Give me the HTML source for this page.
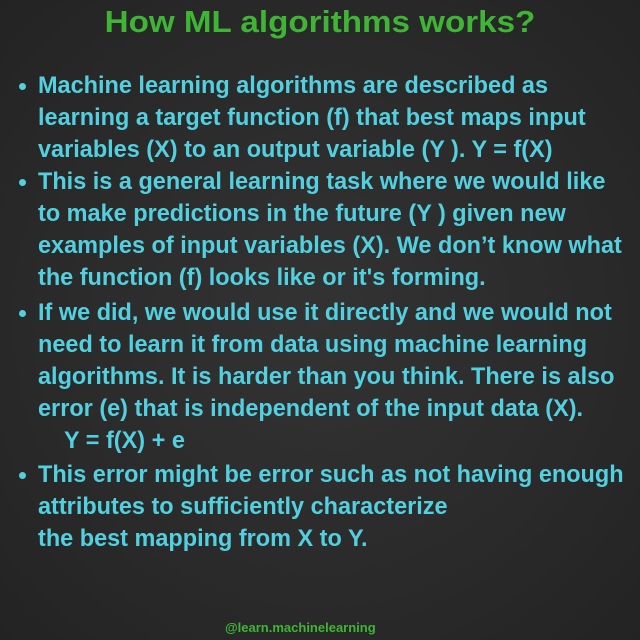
<!DOCTYPE html>
<html><head><style>
body{margin:0;width:640px;height:640px;background:radial-gradient(ellipse at center,#333 0%,#2a2a2a 60%,#232323 100%);overflow:hidden;position:relative;font-family:"Liberation Sans",sans-serif;font-weight:bold}
.t{position:absolute;left:0;width:640px;text-align:center;top:4px;font-size:31px;color:#3fb535;transform:scaleX(1.07);transform-origin:center}
.l{position:absolute;left:38px;font-size:24px;color:#52d0e0;white-space:nowrap;transform:scaleX(0.978);transform-origin:left;line-height:28px}
.b{position:absolute;left:19px;width:7px;height:7px;border-radius:50%;background:#52d0e0}
.f{position:absolute;left:225px;top:620px;font-size:13px;color:#3fb535;white-space:nowrap}
</style></head><body>
<div class="t">How ML algorithms works?</div>
<div class="b" style="top:83px"></div>
<div class="l" style="top:72px">Machine learning algorithms are described as</div>
<div class="l" style="top:104px">learning a target function (f) that best maps input</div>
<div class="l" style="top:136px">variables (X) to an output variable (Y ). Y = f(X)</div>
<div class="b" style="top:179px"></div>
<div class="l" style="top:168px">This is a general learning task where we would like</div>
<div class="l" style="top:200px">to make predictions in the future (Y ) given new</div>
<div class="l" style="top:232px">examples of input variables (X). We don’t know what</div>
<div class="l" style="top:264px">the function (f) looks like or it's forming.</div>
<div class="b" style="top:310px"></div>
<div class="l" style="top:299px">If we did, we would use it directly and we would not</div>
<div class="l" style="top:331px">need to learn it from data using machine learning</div>
<div class="l" style="top:363px">algorithms. It is harder than you think. There is also</div>
<div class="l" style="top:395px">error (e) that is independent of the input data (X).</div>
<div class="l" style="top:427px;left:64px">Y = f(X) + e</div>
<div class="b" style="top:472px"></div>
<div class="l" style="top:461px">This error might be error such as not having enough</div>
<div class="l" style="top:493px">attributes to sufficiently characterize</div>
<div class="l" style="top:525px">the best mapping from X to Y.</div>
<div class="f">@learn.machinelearning</div>
</body></html>
